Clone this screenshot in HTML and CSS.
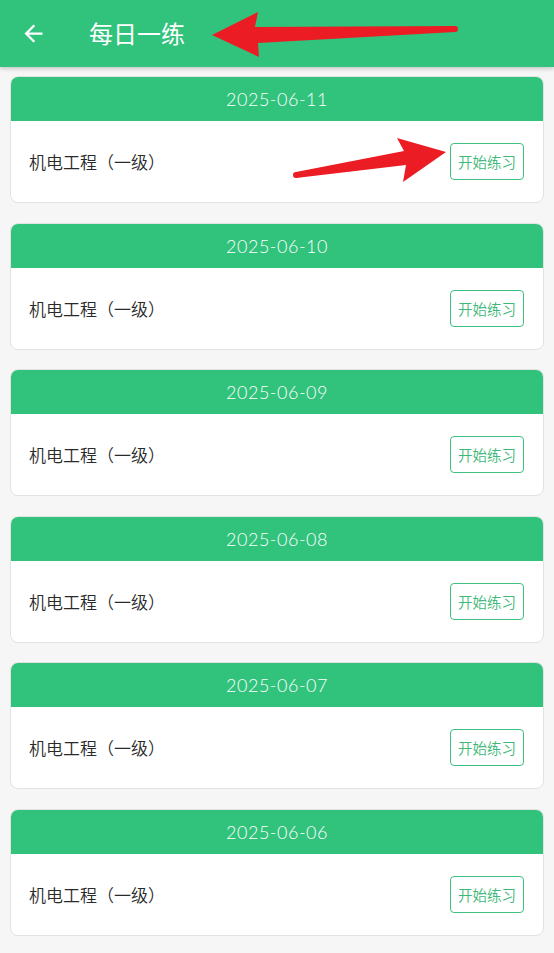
FILE: index.html
```html
<!DOCTYPE html>
<html lang="zh">
<head>
    <meta charset="UTF-8" />
    <meta name="viewport" content="width=device-width, initial-scale=1.0"/>
    <title>每日一练</title>
    <link rel="stylesheet" href="styles.css">
</head>
<body>
    <header class="app-bar">
        <svg class="back-icon" viewBox="0 0 24 24" width="27" height="27">
            <path d="M20 11H7.83l5.59-5.59L12 4l-8 8 8 8 1.41-1.41L7.83 13H20v-2z" fill="#fff"/>
        </svg>
        <h1 class="app-title">每日一练</h1>
    </header>

    <main class="list">
        <div class="card">
            <div class="card-date">2025-06-11</div>
            <div class="card-body">
                <span class="subject">机电工程（一级）</span>
                <button class="start-btn">开始练习</button>
            </div>
        </div>
        <div class="card">
            <div class="card-date">2025-06-10</div>
            <div class="card-body">
                <span class="subject">机电工程（一级）</span>
                <button class="start-btn">开始练习</button>
            </div>
        </div>
        <div class="card">
            <div class="card-date">2025-06-09</div>
            <div class="card-body">
                <span class="subject">机电工程（一级）</span>
                <button class="start-btn">开始练习</button>
            </div>
        </div>
        <div class="card">
            <div class="card-date">2025-06-08</div>
            <div class="card-body">
                <span class="subject">机电工程（一级）</span>
                <button class="start-btn">开始练习</button>
            </div>
        </div>
        <div class="card">
            <div class="card-date">2025-06-07</div>
            <div class="card-body">
                <span class="subject">机电工程（一级）</span>
                <button class="start-btn">开始练习</button>
            </div>
        </div>
        <div class="card">
            <div class="card-date">2025-06-06</div>
            <div class="card-body">
                <span class="subject">机电工程（一级）</span>
                <button class="start-btn">开始练习</button>
            </div>
        </div>
    </main>

    <!-- annotation arrows drawn over the screenshot -->
    <svg class="annotations" width="554" height="953" viewBox="0 0 554 953">
        <g fill="#ec1c24">
            <polygon points="212,35 258,12 255,27 455,26 455,32 258,43 259,57"/>
            <circle cx="455" cy="29" r="3"/>
            <polygon points="446,152 397,138 404,151 296,172 296,178 406,165 403,182"/>
            <circle cx="296" cy="175" r="3"/>
        </g>
    </svg>
</body>
</html>
```

FILE: styles.css
```css
body {
    margin: 0;
    padding: 0;
    background: #f6f6f6;
    font-family: "Noto Sans CJK SC", "Noto Sans", sans-serif;
    position: relative;
}

.app-bar {
    height: 67px;
    background: #31c27c;
    display: flex;
    align-items: center;
    box-shadow: 0 2px 4px rgba(0,0,0,0.18);
    position: relative;
    z-index: 1;
}

.back-icon {
    margin-left: 20px;
    margin-top: -1px;
}

.app-title {
    margin: 0 0 0 42px;
    font-size: 24px;
    font-weight: 400;
    color: #fff;
    line-height: 1;
    margin-top: -2px;
}

.list {
    padding: 9px 10px;
    display: flex;
    flex-direction: column;
    gap: 19.6px;
}

.card {
    background: #fff;
    border: 1px solid #e2e2e2;
    border-radius: 8px;
    overflow: hidden;
    height: 127px;
    box-sizing: border-box;
    display: flex;
    flex-direction: column;
}

.card-date {
    height: 44px;
    background: #31c27c;
    color: #fff;
    display: flex;
    align-items: center;
    justify-content: center;
    font-family: Lato, sans-serif;
    font-weight: 300;
    font-size: 18px;
    letter-spacing: 0.5px;
}

.card-body {
    flex: 1;
    display: flex;
    align-items: center;
    justify-content: space-between;
    padding: 0 19px 0 18px;
}

.subject {
    font-size: 17px;
    color: #2a2a2a;
    font-weight: 350;
}

.start-btn {
    width: 74px;
    height: 37px;
    border: 1px solid #3fbf80;
    border-radius: 4px;
    background: #fff;
    color: #3cb878;
    font-family: "Noto Sans CJK SC", sans-serif;
    font-size: 14.5px;
    font-weight: 350;
    padding: 0;
}

.annotations {
    position: absolute;
    left: 0;
    top: 0;
    z-index: 2;
    pointer-events: none;
}
```
